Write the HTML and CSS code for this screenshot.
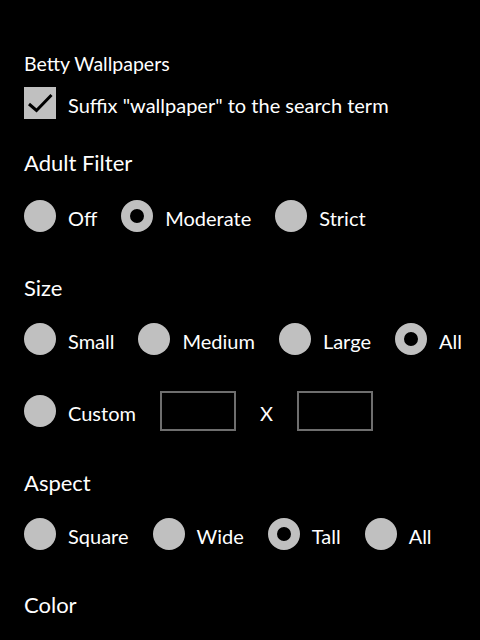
FILE: index.html
```html
<!DOCTYPE html>
<html lang="en">

<head>
    <meta charset="UTF-8">
    <meta name="viewport" content="width=device-width, initial-scale=1.0">
    <title>Settings</title>
    <link rel="stylesheet" href="styles.css">
</head>

<body>
    <div class="page">
        <div class="app-title">Betty Wallpapers</div>

        <div class="check-row">
            <span class="checkbox">
                <svg width="32" height="32" viewBox="0 0 32 32">
                    <path d="M5 17 L12.5 23.5 L27.5 8" fill="none" stroke="#000" stroke-width="3" />
                </svg>
            </span>
            <span class="label">Suffix "wallpaper" to the search term</span>
        </div>

        <h2 class="heading adult">Adult Filter</h2>
        <div class="radio-row first">
            <div class="option"><span class="radio"></span><span class="label">Off</span></div>
            <div class="option"><span class="radio checked"></span><span class="label">Moderate</span></div>
            <div class="option"><span class="radio"></span><span class="label">Strict</span></div>
        </div>

        <h2 class="heading size">Size</h2>
        <div class="radio-row">
            <div class="option"><span class="radio"></span><span class="label">Small</span></div>
            <div class="option"><span class="radio"></span><span class="label">Medium</span></div>
            <div class="option"><span class="radio"></span><span class="label">Large</span></div>
            <div class="option"><span class="radio checked"></span><span class="label">All</span></div>
        </div>
        <div class="radio-row custom">
            <div class="option"><span class="radio"></span><span class="label">Custom</span></div>
            <div class="textbox"></div>
            <span class="label">X</span>
            <div class="textbox"></div>
        </div>

        <h2 class="heading aspect">Aspect</h2>
        <div class="radio-row">
            <div class="option"><span class="radio"></span><span class="label">Square</span></div>
            <div class="option"><span class="radio"></span><span class="label">Wide</span></div>
            <div class="option"><span class="radio checked"></span><span class="label">Tall</span></div>
            <div class="option"><span class="radio"></span><span class="label">All</span></div>
        </div>

        <h2 class="heading color">Color</h2>
    </div>
</body>

</html>
```

FILE: styles.css
```css
body {
    margin: 0;
    background-color: #000;
    color: #fff;
    font-family: Lato, 'Noto Sans', sans-serif;
    overflow: hidden;
}

.page {
    padding: 52px 24px 0 24px;
}

.app-title {
    font-size: 19.5px;
    line-height: 24px;
}

.check-row {
    display: flex;
    align-items: center;
    gap: 12px;
    margin-top: 11px;
    height: 32px;
}

.checkbox {
    width: 32px;
    height: 32px;
    background-color: #c0c0c0;
    flex-shrink: 0;
}

.checkbox svg {
    display: block;
}

.label {
    font-size: 20px;
    line-height: 32px;
    white-space: nowrap;
    padding-top: 3px;
}

.heading {
    font-size: 22px;
    font-weight: normal;
    line-height: 32px;
    margin: 0;
}

.adult {
    margin-top: 28px;
}

.size {
    margin-top: 40px;
}

.aspect {
    margin-top: 36px;
}

.color {
    margin-top: 39px;
}

.radio-row {
    display: flex;
    align-items: center;
    gap: 24px;
    height: 32px;
    margin-top: 19px;
}

.radio-row.first {
    margin-top: 21px;
}

.radio-row.custom {
    height: 40px;
    margin-top: 36px;
}

.option {
    display: flex;
    align-items: center;
    gap: 12px;
}

.radio {
    width: 32px;
    height: 32px;
    border-radius: 50%;
    background-color: #c0c0c0;
    box-sizing: border-box;
    flex-shrink: 0;
}

.radio.checked {
    background-color: #000;
    border: 9px solid #c0c0c0;
}

.textbox {
    width: 76px;
    height: 40px;
    border: 2px solid #6e6e6e;
    box-sizing: border-box;
}
```
